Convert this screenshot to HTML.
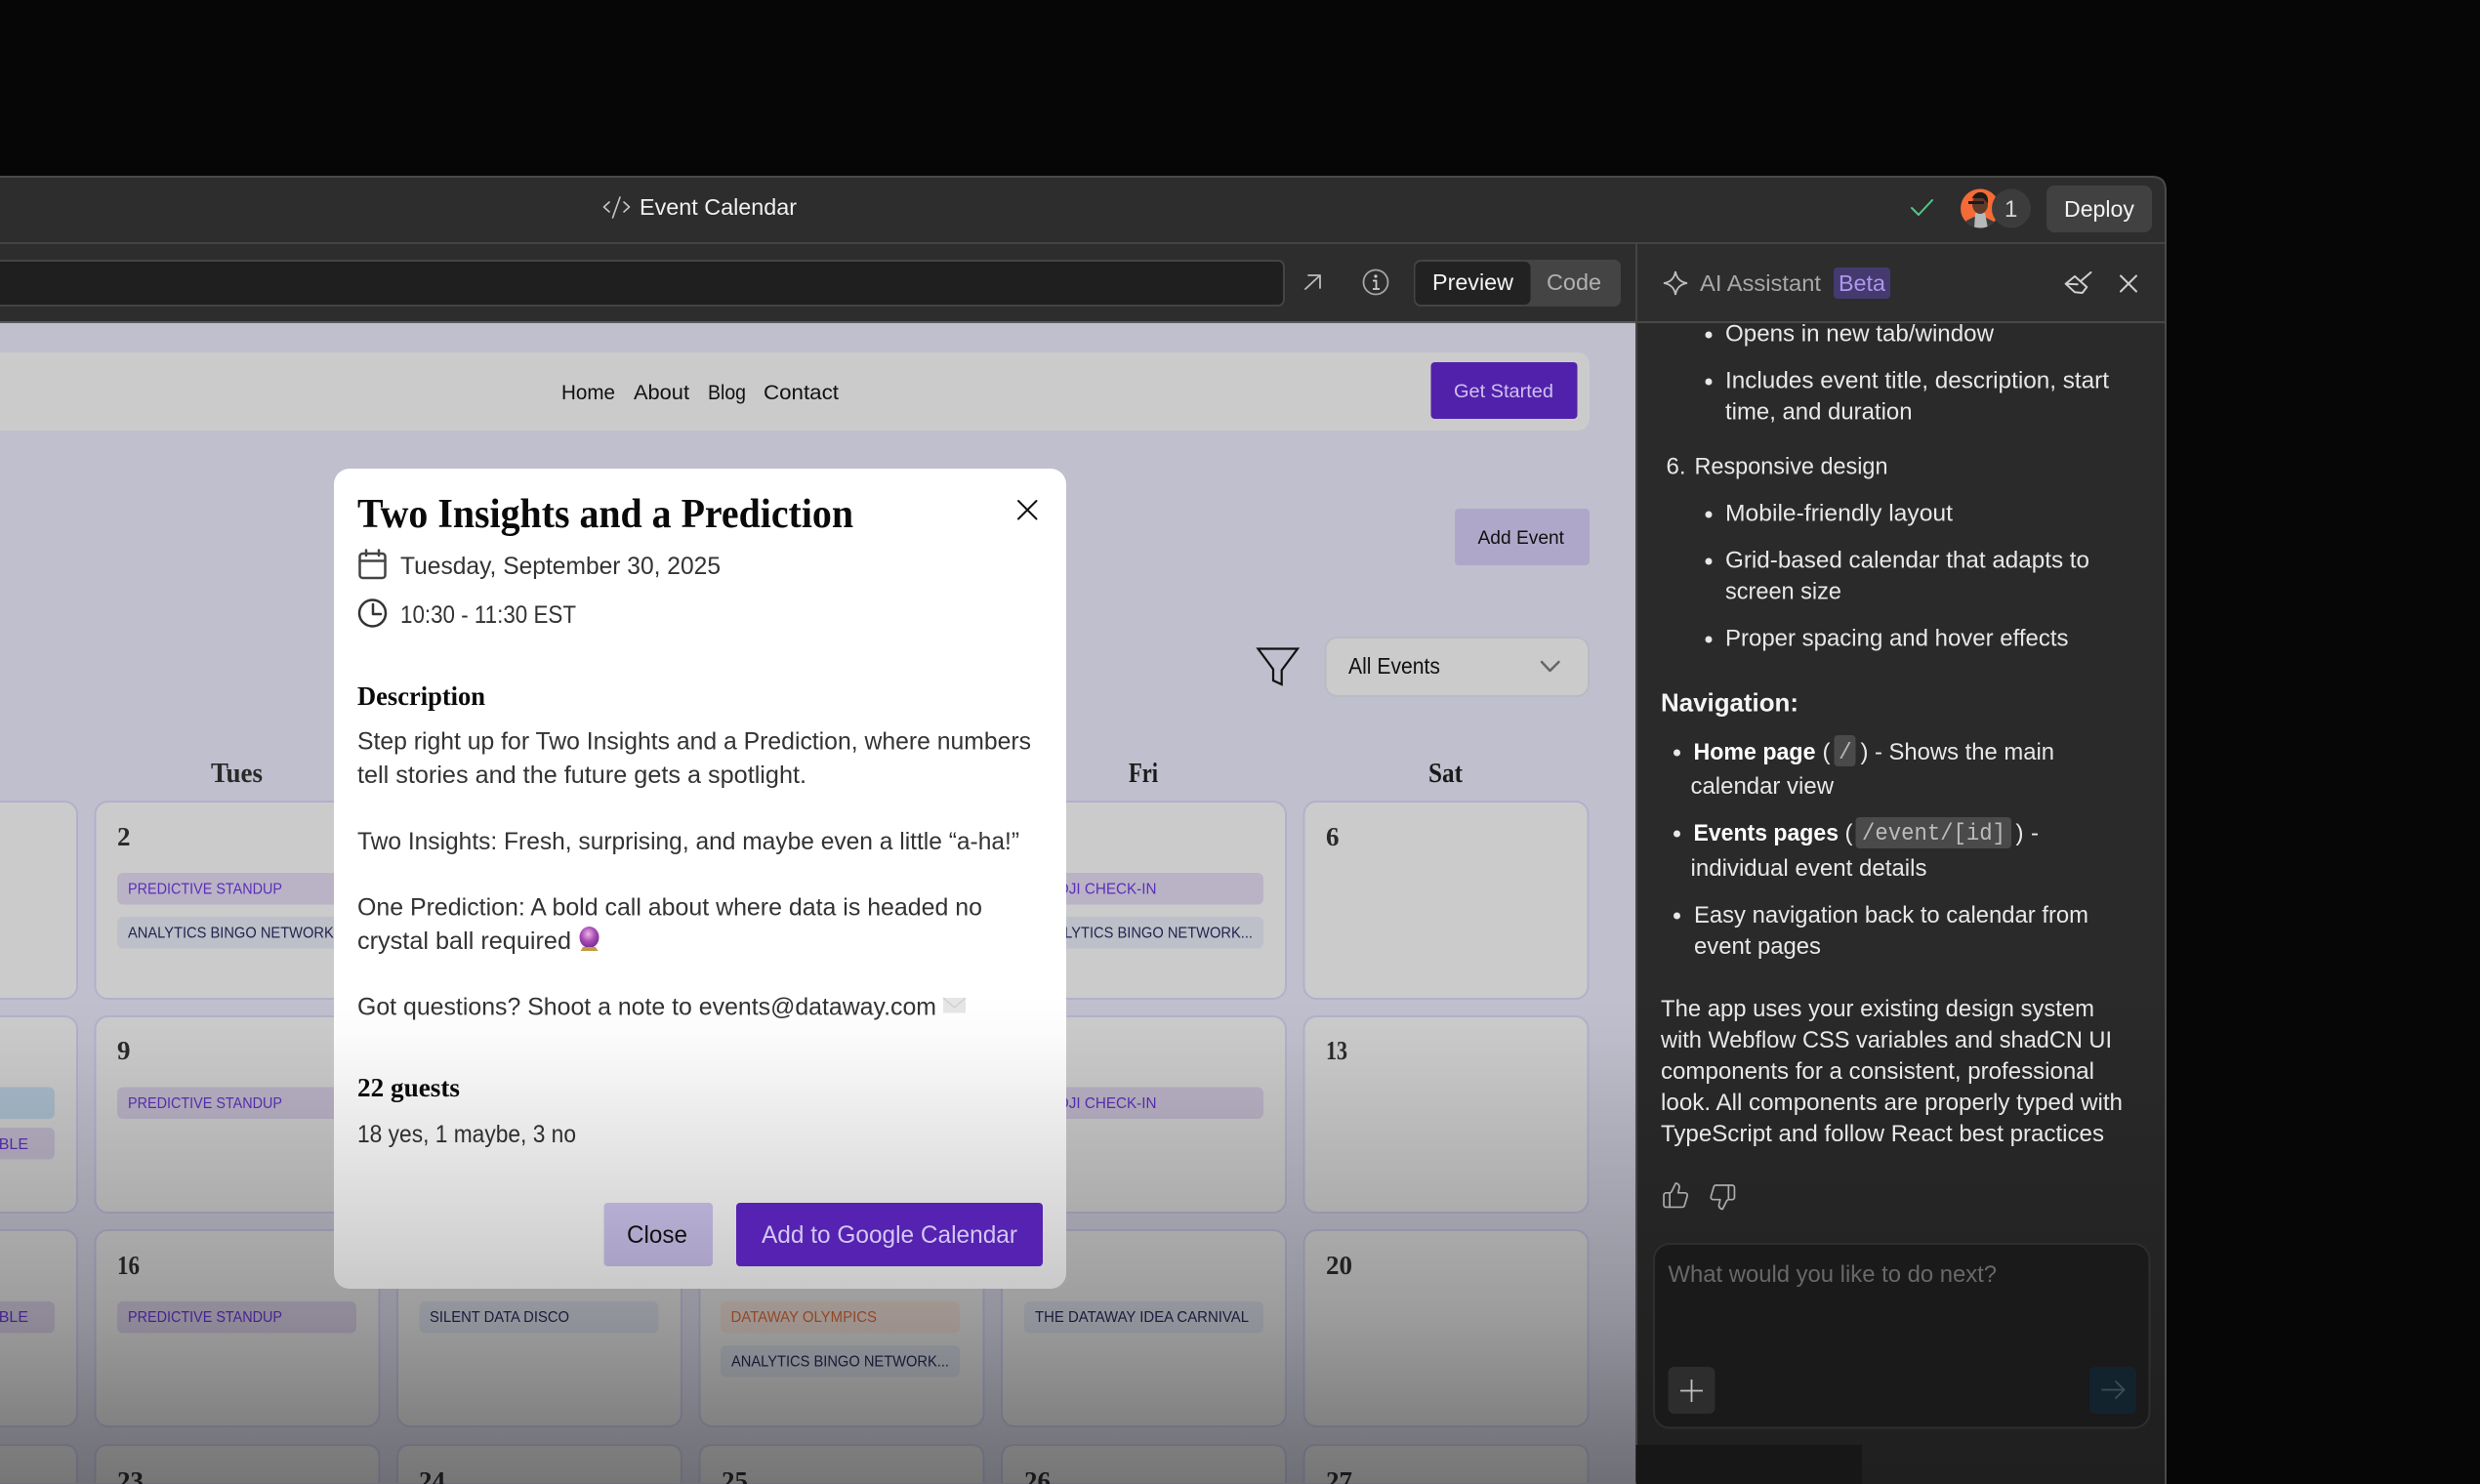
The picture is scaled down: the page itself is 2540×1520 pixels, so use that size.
<!DOCTYPE html>
<html lang="en">
<head>
<meta charset="utf-8">
<title>Event Calendar</title>
<style>
html,body{margin:0;padding:0;background:#060606;width:2540px;height:1520px;overflow:hidden}
svg{display:block;position:absolute;left:0;top:0}
text{font-family:"Liberation Sans",sans-serif;white-space:pre}
.serif{font-family:"Liberation Serif",serif;font-weight:700}
.mono{font-family:"Liberation Mono",monospace}
.cell{fill:#cbcbcb;stroke:#b3b0cc;stroke-width:2}
.day{font-family:"Liberation Serif",serif;font-weight:700;font-size:27px;fill:#2a2a2a}
.hd{font-family:"Liberation Serif",serif;font-weight:700;font-size:28px;fill:#1a1a1a}
.tp{fill:#bab3c6}.tg{fill:#bdc0c9}.tb{fill:#a9bccb}.to{fill:#cfc0b9}
.lp{font-size:16px;fill:#5a2fb8}.ln{font-size:16px;fill:#24244e}.lo{font-size:16px;fill:#bd5d32}
.m{font-size:25px;fill:#333}
.p{font-size:24px;fill:#e8e8e8}
.pb{font-size:24px;fill:#fff;font-weight:700}
.ic{fill:none;stroke-linecap:round;stroke-linejoin:round}
</style>
</head>
<body>
<svg width="2540" height="1520" viewBox="0 0 2540 1520" xmlns="http://www.w3.org/2000/svg">
<defs>
<clipPath id="pv"><rect x="0" y="330" width="1675" height="1190"/></clipPath>
<linearGradient id="ov" x1="0" y1="1020" x2="0" y2="1520" gradientUnits="userSpaceOnUse">
<stop offset="0" stop-color="#000" stop-opacity="0"/>
<stop offset="0.08" stop-color="#000" stop-opacity="0.015"/>
<stop offset="0.28" stop-color="#000" stop-opacity="0.09"/>
<stop offset="0.48" stop-color="#000" stop-opacity="0.165"/>
<stop offset="0.60" stop-color="#000" stop-opacity="0.21"/>
<stop offset="0.66" stop-color="#000" stop-opacity="0.235"/>
<stop offset="0.876" stop-color="#000" stop-opacity="0.36"/>
<stop offset="1" stop-color="#000" stop-opacity="0.42"/>
</linearGradient>
<linearGradient id="panel" x1="0" y1="1000" x2="0" y2="1520" gradientUnits="userSpaceOnUse">
<stop offset="0" stop-color="#2a2a2a"/>
<stop offset="1" stop-color="#1f1f1f"/>
</linearGradient>
<linearGradient id="closeb" x1="0" y1="1232" x2="0" y2="1297" gradientUnits="userSpaceOnUse">
<stop offset="0" stop-color="#b6aed3"/>
<stop offset="1" stop-color="#aaa1c6"/>
</linearGradient>
<radialGradient id="ball" cx="0.45" cy="0.35" r="0.7">
<stop offset="0" stop-color="#ecb8e4"/>
<stop offset="0.5" stop-color="#a94cb6"/>
<stop offset="1" stop-color="#6a2a88"/>
</radialGradient>
<clipPath id="av"><circle cx="2028" cy="213.5" r="20"/></clipPath>
</defs>

<!-- page -->
<rect width="2540" height="1520" fill="#060606"/>

<!-- window frame -->
<path d="M-4 181 H2204 Q2218 181 2218 195 V1519 H-4 Z" fill="#2d2d2d" stroke="#4a4a4a" stroke-width="2"/>

<!-- title bar -->
<g class="ic" stroke="#c4c4c4" stroke-width="1.6">
<path d="M624 207 L618.5 212 L624 217"/><path d="M635 202 L627.5 223"/><path d="M639 207 L644.5 212 L639 217"/>
</g>
<text x="655" y="220" font-size="23" fill="#f0f0f0" textLength="161" lengthAdjust="spacingAndGlyphs">Event Calendar</text>
<path class="ic" d="M1958 213 L1965 220 L1979 205" stroke="#52c98c" stroke-width="2"/>
<g clip-path="url(#av)">
<rect x="2008" y="193" width="40" height="41" fill="#f46b36"/>
<path d="M2008 234 L2014 226 L2022 222 L2032 222 L2044 228 L2048 234 Z" fill="#3a3d3c"/>
<path d="M2022 234 L2023 218 L2033 218 L2036 234 Z" fill="#b5b9ba"/>
<ellipse cx="2028" cy="209" rx="8" ry="10" fill="#5d3a2b"/>
<path d="M2019 205 Q2022 196 2030 197 Q2037 199 2036 208 L2031 203 L2020 203 Z" fill="#1e1a18"/>
<rect x="2016" y="206" width="16" height="3" fill="#1a1a1a"/>
</g>
<circle cx="2060" cy="213.5" r="20" fill="#3c3c3c"/>
<text x="2053" y="222" font-size="24" fill="#d6d6d6">1</text>
<rect x="2096" y="190" width="108" height="48" rx="8" fill="#414141"/>
<text x="2114" y="222" font-size="23" fill="#f2f2f2" textLength="72" lengthAdjust="spacingAndGlyphs">Deploy</text>
<rect x="0" y="248" width="2217" height="2" fill="#444"/>

<!-- toolbar -->
<rect x="-10" y="267" width="1325" height="46" rx="6" fill="#1f1f1f" stroke="#444" stroke-width="2"/>
<path class="ic" d="M1337 296 L1352 282 M1340 282 H1352 V295" stroke="#bdbdbd" stroke-width="1.8"/>
<circle cx="1409" cy="289" r="12.5" fill="none" stroke="#a5a5a5" stroke-width="1.8"/>
<circle cx="1409" cy="283" r="1.6" fill="#d0d0d0"/>
<path d="M1406 287.5 H1409.5 V296 M1406 296 H1413" fill="none" stroke="#d0d0d0" stroke-width="1.7"/>
<rect x="1448" y="266" width="212" height="48" rx="7" fill="#444"/>
<rect x="1449.5" y="268" width="118" height="44" rx="6" fill="#222"/>
<text x="1467" y="297" font-size="23" fill="#f4f4f4" textLength="83" lengthAdjust="spacingAndGlyphs">Preview</text>
<text x="1584" y="297" font-size="23" fill="#b0b0b0" textLength="56" lengthAdjust="spacingAndGlyphs">Code</text>

<!-- preview -->
<g clip-path="url(#pv)">
<rect x="0" y="330" width="1675" height="1190" fill="#bfbfcd"/>
<rect x="-20" y="361" width="1648" height="80" rx="12" fill="#cbcbcb"/>
<text x="575" y="409" font-size="21.5" fill="#111" textLength="55" lengthAdjust="spacingAndGlyphs">Home</text>
<text x="649" y="409" font-size="21.5" fill="#111" textLength="57" lengthAdjust="spacingAndGlyphs">About</text>
<text x="725" y="409" font-size="21.5" fill="#111" textLength="39" lengthAdjust="spacingAndGlyphs">Blog</text>
<text x="782" y="409" font-size="21.5" fill="#111" textLength="77" lengthAdjust="spacingAndGlyphs">Contact</text>
<rect x="1465.5" y="371" width="150" height="58" rx="4" fill="#5121ab"/>
<text x="1489" y="407" font-size="19" fill="#cfc1ef" textLength="102" lengthAdjust="spacingAndGlyphs">Get Started</text>
<rect x="1490" y="521" width="138" height="58" rx="4" fill="#afa7c9"/>
<text x="1513.5" y="557" font-size="19" fill="#111" textLength="88.5" lengthAdjust="spacingAndGlyphs">Add Event</text>

<!-- filter -->
<path d="M1288.5 664.5 H1329 L1312.7 686.5 V701 L1304 697 V685.5 Z" fill="none" stroke="#111" stroke-width="2.2" stroke-linejoin="miter"/>
<rect x="1357.5" y="653" width="269.5" height="60" rx="12" fill="#cbcbcb" stroke="#bab9c6" stroke-width="2"/>
<text x="1381" y="690" font-size="23" fill="#111" textLength="94" lengthAdjust="spacingAndGlyphs">All Events</text>
<path class="ic" d="M1579 678 L1587.5 687 L1596.5 678" stroke="#666" stroke-width="2.5"/>

<!-- day headers -->
<text class="hd" x="216" y="801" textLength="53" lengthAdjust="spacingAndGlyphs" style="fill:#2a2a2a">Tues</text>
<text class="hd" x="1156" y="801" textLength="30" lengthAdjust="spacingAndGlyphs">Fri</text>
<text class="hd" x="1463" y="801" textLength="35" lengthAdjust="spacingAndGlyphs">Sat</text>

<!-- row 1 -->
<rect class="cell" x="-212" y="821" width="291" height="202" rx="13"/>
<rect class="cell" x="97.5" y="821" width="291" height="202" rx="13"/>
<rect class="cell" x="407" y="821" width="291" height="202" rx="13"/>
<rect class="cell" x="716.5" y="821" width="291" height="202" rx="13"/>
<rect class="cell" x="1026" y="821" width="291" height="202" rx="13"/>
<rect class="cell" x="1335.5" y="821" width="291" height="202" rx="13"/>
<!-- row 2 -->
<rect class="cell" x="-212" y="1041" width="291" height="201" rx="13"/>
<rect class="cell" x="97.5" y="1041" width="291" height="201" rx="13"/>
<rect class="cell" x="407" y="1041" width="291" height="201" rx="13"/>
<rect class="cell" x="716.5" y="1041" width="291" height="201" rx="13"/>
<rect class="cell" x="1026" y="1041" width="291" height="201" rx="13"/>
<rect class="cell" x="1335.5" y="1041" width="291" height="201" rx="13"/>
<!-- row 3 -->
<rect class="cell" x="-212" y="1260" width="291" height="201" rx="13"/>
<rect class="cell" x="97.5" y="1260" width="291" height="201" rx="13"/>
<rect class="cell" x="407" y="1260" width="291" height="201" rx="13"/>
<rect class="cell" x="716.5" y="1260" width="291" height="201" rx="13"/>
<rect class="cell" x="1026" y="1260" width="291" height="201" rx="13"/>
<rect class="cell" x="1335.5" y="1260" width="291" height="201" rx="13"/>
<!-- row 4 (cut by frame) -->
<path class="cell" d="M-5 1519 V1480 H66 Q79 1480 79 1493 V1519"/>
<path class="cell" d="M97.5 1519 V1493 Q97.5 1480 110.5 1480 H375.5 Q388.5 1480 388.5 1493 V1519"/>
<path class="cell" d="M407 1519 V1493 Q407 1480 420 1480 H685 Q698 1480 698 1493 V1519"/>
<path class="cell" d="M716.5 1519 V1493 Q716.5 1480 729.5 1480 H994.5 Q1007.5 1480 1007.5 1493 V1519"/>
<path class="cell" d="M1026 1519 V1493 Q1026 1480 1039 1480 H1304 Q1317 1480 1317 1493 V1519"/>
<path class="cell" d="M1335.5 1519 V1493 Q1335.5 1480 1348.5 1480 H1613.5 Q1626.5 1480 1626.5 1493 V1519"/>

<!-- day numbers -->
<text class="day" x="120" y="866">2</text>
<text class="day" x="1358" y="866">6</text>
<text class="day" x="120" y="1085">9</text>
<text class="day" x="1358" y="1085" textLength="22" lengthAdjust="spacingAndGlyphs">13</text>
<text class="day" x="120" y="1305" textLength="23" lengthAdjust="spacingAndGlyphs">16</text>
<text class="day" x="1358" y="1305" textLength="27" lengthAdjust="spacingAndGlyphs">20</text>
<text class="day" x="120" y="1526" textLength="27" lengthAdjust="spacingAndGlyphs">23</text>
<text class="day" x="429" y="1526" textLength="27" lengthAdjust="spacingAndGlyphs">24</text>
<text class="day" x="739" y="1526" textLength="27" lengthAdjust="spacingAndGlyphs">25</text>
<text class="day" x="1049" y="1526" textLength="27" lengthAdjust="spacingAndGlyphs">26</text>
<text class="day" x="1358" y="1526" textLength="27" lengthAdjust="spacingAndGlyphs">27</text>

<!-- Tues tags -->
<rect class="tp" x="120" y="894" width="245" height="32.5" rx="6"/>
<text class="lp" x="131" y="915.5" textLength="158" lengthAdjust="spacingAndGlyphs">PREDICTIVE STANDUP</text>
<rect class="tg" x="120" y="939" width="245" height="32.5" rx="6"/>
<text class="ln" x="131" y="960.5" textLength="223" lengthAdjust="spacingAndGlyphs">ANALYTICS BINGO NETWORK...</text>
<rect class="tp" x="120" y="1113.5" width="245" height="32.5" rx="6"/>
<text class="lp" x="131" y="1135" textLength="158" lengthAdjust="spacingAndGlyphs">PREDICTIVE STANDUP</text>
<rect class="tp" x="120" y="1333" width="245" height="32.5" rx="6"/>
<text class="lp" x="131" y="1354" textLength="158" lengthAdjust="spacingAndGlyphs">PREDICTIVE STANDUP</text>
<!-- Mon tags -->
<rect class="tb" x="-190" y="1113.5" width="246" height="32.5" rx="6"/>
<rect class="tp" x="-190" y="1155" width="246" height="32.5" rx="6"/>
<text class="lp" x="29" y="1177" text-anchor="end">ROUND TABLE</text>
<rect class="tp" x="-190" y="1333" width="246" height="32.5" rx="6"/>
<text class="lp" x="29" y="1354" text-anchor="end">ROUND TABLE</text>
<!-- Wed / Thu -->
<rect class="tg" x="429.5" y="1333" width="245" height="32.5" rx="6"/>
<text class="ln" x="440" y="1354" textLength="143" lengthAdjust="spacingAndGlyphs">SILENT DATA DISCO</text>
<rect class="to" x="738" y="1333" width="245" height="32.5" rx="6"/>
<text class="lo" x="748.5" y="1354" textLength="149.5" lengthAdjust="spacingAndGlyphs">DATAWAY OLYMPICS</text>
<rect class="tg" x="738" y="1378" width="245" height="32.5" rx="6"/>
<text class="ln" x="749" y="1399.5" textLength="223" lengthAdjust="spacingAndGlyphs">ANALYTICS BINGO NETWORK...</text>
<!-- Fri -->
<rect class="tp" x="1049" y="894" width="245" height="32.5" rx="6"/>
<text class="lp" x="1060" y="915.5" textLength="124.5" lengthAdjust="spacingAndGlyphs">EMOJI CHECK-IN</text>
<rect class="tg" x="1049" y="939" width="245" height="32.5" rx="6"/>
<text class="ln" x="1060" y="960.5" textLength="223" lengthAdjust="spacingAndGlyphs">ANALYTICS BINGO NETWORK...</text>
<rect class="tp" x="1049" y="1113.5" width="245" height="32.5" rx="6"/>
<text class="lp" x="1060" y="1135" textLength="124.5" lengthAdjust="spacingAndGlyphs">EMOJI CHECK-IN</text>
<rect class="tg" x="1049" y="1333" width="245" height="32.5" rx="6"/>
<text class="ln" x="1060" y="1354" textLength="219" lengthAdjust="spacingAndGlyphs">THE DATAWAY IDEA CARNIVAL</text>

<!-- modal -->
<rect x="342" y="480" width="750" height="840" rx="16" fill="#fff"/>
<text class="serif" x="366" y="540" font-size="42" fill="#0a0a0a" textLength="508" lengthAdjust="spacingAndGlyphs">Two Insights and a Prediction</text>
<path class="ic" d="M1043 513 L1061.5 531.5 M1061.5 513 L1043 531.5" stroke="#111" stroke-width="2"/>
<g class="ic" stroke="#444" stroke-width="2.5">
<rect x="368.5" y="567" width="26" height="25" rx="3"/>
<path d="M368.5 574.5 H394.5 M375 563.5 V569 M388 563.5 V569"/>
</g>
<text class="m" x="410" y="588" textLength="328" lengthAdjust="spacingAndGlyphs">Tuesday, September 30, 2025</text>
<g class="ic" stroke="#333" stroke-width="2.5">
<circle cx="381.5" cy="628" r="13.5"/>
<path d="M382 619 V629 H390"/>
</g>
<text class="m" x="410" y="638" textLength="180" lengthAdjust="spacingAndGlyphs">10:30 - 11:30 EST</text>
<text class="serif" x="366" y="722" font-size="27" fill="#0a0a0a" textLength="131" lengthAdjust="spacingAndGlyphs">Description</text>
<text class="m" x="366" y="767.5" textLength="690" lengthAdjust="spacingAndGlyphs">Step right up for Two Insights and a Prediction, where numbers</text>
<text class="m" x="366" y="802" textLength="460" lengthAdjust="spacingAndGlyphs">tell stories and the future gets a spotlight.</text>
<text class="m" x="366" y="870" textLength="678" lengthAdjust="spacingAndGlyphs">Two Insights: Fresh, surprising, and maybe even a little “a-ha!”</text>
<text class="m" x="366" y="937.5" textLength="640" lengthAdjust="spacingAndGlyphs">One Prediction: A bold call about where data is headed no</text>
<text class="m" x="366" y="972" textLength="219" lengthAdjust="spacingAndGlyphs">crystal ball required</text>
<ellipse cx="603.5" cy="960" rx="10" ry="11" fill="url(#ball)"/>
<path d="M597 970 H610 L612.5 974 H594.5 Z" fill="#c49a45"/>
<text class="m" x="366" y="1039.5" textLength="593" lengthAdjust="spacingAndGlyphs">Got questions? Shoot a note to events@dataway.com</text>
<rect x="966" y="1022" width="23" height="15.5" fill="#e6e6e6"/>
<path d="M966 1022 L977.5 1032 L989 1022" fill="none" stroke="#cfcfcf" stroke-width="1.2"/>
<text class="serif" x="366" y="1123" font-size="27" fill="#0a0a0a" textLength="105" lengthAdjust="spacingAndGlyphs">22 guests</text>
<text class="m" x="366" y="1170" textLength="224" lengthAdjust="spacingAndGlyphs">18 yes, 1 maybe, 3 no</text>

<!-- dim gradient -->
<rect x="0" y="1020" width="1675" height="500" fill="url(#ov)"/>

<!-- modal buttons -->
<rect x="618.5" y="1232" width="111.5" height="65" rx="4" fill="url(#closeb)"/>
<text x="642" y="1273" font-size="25" fill="#111" textLength="62" lengthAdjust="spacingAndGlyphs">Close</text>
<rect x="754" y="1232" width="314" height="65" rx="4" fill="#5522b2"/>
<text x="780" y="1273" font-size="25" fill="#d3c6f2" textLength="262" lengthAdjust="spacingAndGlyphs">Add to Google Calendar</text>
</g>

<!-- AI panel -->
<rect x="1676" y="330" width="541" height="1190" fill="url(#panel)"/>
<rect x="1675" y="250" width="2" height="1230" fill="#444"/>
<rect x="1676" y="1480" width="231" height="40" fill="#171717"/>
<rect x="1677" y="329" width="540" height="2" fill="#484848"/>
<rect x="0" y="329" width="1675" height="2" fill="#5a5a5e"/>
<rect x="2217" y="195" width="2" height="1325" fill="#4a4a4a"/>

<path d="M1716 278 C1717 285 1721 289 1728 290 C1721 291 1717 295 1716 302 C1715 295 1711 291 1704 290 C1711 289 1715 285 1716 278 Z" fill="none" stroke="#bdbdbd" stroke-width="1.8"/>
<text x="1741" y="298" font-size="23" fill="#a8a8a8" textLength="124" lengthAdjust="spacingAndGlyphs">AI Assistant</text>
<rect x="1878" y="274" width="58" height="32" rx="4" fill="#453a70"/>
<text x="1883" y="298" font-size="23" fill="#ac97ec" textLength="48" lengthAdjust="spacingAndGlyphs">Beta</text>
<g class="ic" stroke="#cfcfcf" stroke-width="2">
<path d="M2115.7 290.7 L2125 283 L2137.3 294 L2132.7 300 L2125 299.3 Z"/>
<path d="M2115.7 290.7 L2127.7 291.3"/>
<path d="M2131 288 L2141.5 279"/>
</g>
<path class="ic" d="M2172 282.5 L2188 298.5 M2188 282.5 L2172 298.5" stroke="#cfcfcf" stroke-width="2"/>

<circle cx="1750" cy="343" r="3.5" fill="#e8e8e8"/>
<text class="p" x="1767" y="349.5" textLength="275" lengthAdjust="spacingAndGlyphs">Opens in new tab/window</text>
<circle cx="1750" cy="391" r="3.5" fill="#e8e8e8"/>
<text class="p" x="1767" y="397.5" textLength="393" lengthAdjust="spacingAndGlyphs">Includes event title, description, start</text>
<text class="p" x="1767" y="429.5" textLength="191.5" lengthAdjust="spacingAndGlyphs">time, and duration</text>
<text class="p" x="1706.5" y="485.5">6.</text>
<text class="p" x="1735.5" y="485.5" textLength="198" lengthAdjust="spacingAndGlyphs">Responsive design</text>
<circle cx="1750" cy="527" r="3.5" fill="#e8e8e8"/>
<text class="p" x="1767" y="533.5" textLength="233" lengthAdjust="spacingAndGlyphs">Mobile-friendly layout</text>
<circle cx="1750" cy="575" r="3.5" fill="#e8e8e8"/>
<text class="p" x="1767" y="581.5" textLength="373" lengthAdjust="spacingAndGlyphs">Grid-based calendar that adapts to</text>
<text class="p" x="1767" y="613.5" textLength="119" lengthAdjust="spacingAndGlyphs">screen size</text>
<circle cx="1750" cy="655" r="3.5" fill="#e8e8e8"/>
<text class="p" x="1767" y="661.5" textLength="351.5" lengthAdjust="spacingAndGlyphs">Proper spacing and hover effects</text>

<text x="1701" y="728.5" font-size="26" font-weight="700" fill="#f4f4f4" textLength="141" lengthAdjust="spacingAndGlyphs">Navigation:</text>

<circle cx="1717.5" cy="771" r="3.5" fill="#e8e8e8"/>
<text class="pb" x="1734.5" y="778" textLength="125" lengthAdjust="spacingAndGlyphs">Home page</text>
<text class="p" x="1866.5" y="778">(</text>
<rect x="1878.5" y="753" width="22" height="32" rx="4" fill="#4a4a4a"/>
<text class="mono" x="1883" y="777" font-size="23" fill="#b5b5b5">/</text>
<text class="p" x="1905.5" y="778">)</text>
<text class="p" x="1920" y="778" textLength="184" lengthAdjust="spacingAndGlyphs">- Shows the main</text>
<text class="p" x="1731.5" y="813" textLength="146.5" lengthAdjust="spacingAndGlyphs">calendar view</text>

<circle cx="1717.5" cy="854" r="3.5" fill="#e8e8e8"/>
<text class="pb" x="1734.5" y="861" textLength="148.5" lengthAdjust="spacingAndGlyphs">Events pages</text>
<text class="p" x="1889.5" y="861">(</text>
<rect x="1900.5" y="837" width="159.5" height="32" rx="4" fill="#4a4a4a"/>
<text class="mono" x="1907" y="860" font-size="24" fill="#bcbcbc" textLength="147" lengthAdjust="spacingAndGlyphs">/event/[id]</text>
<text class="p" x="2064.5" y="861">)</text>
<text class="p" x="2080" y="861">-</text>
<text class="p" x="1731.5" y="897" textLength="242" lengthAdjust="spacingAndGlyphs">individual event details</text>

<circle cx="1717.5" cy="938" r="3.5" fill="#e8e8e8"/>
<text class="p" x="1735" y="945" textLength="404" lengthAdjust="spacingAndGlyphs">Easy navigation back to calendar from</text>
<text class="p" x="1735" y="977" textLength="130" lengthAdjust="spacingAndGlyphs">event pages</text>

<text class="p" x="1701" y="1041" textLength="444" lengthAdjust="spacingAndGlyphs">The app uses your existing design system</text>
<text class="p" x="1701" y="1073" textLength="462" lengthAdjust="spacingAndGlyphs">with Webflow CSS variables and shadCN UI</text>
<text class="p" x="1701" y="1105" textLength="444" lengthAdjust="spacingAndGlyphs">components for a consistent, professional</text>
<text class="p" x="1701" y="1137" textLength="473" lengthAdjust="spacingAndGlyphs">look. All components are properly typed with</text>
<text class="p" x="1701" y="1169" textLength="454" lengthAdjust="spacingAndGlyphs">TypeScript and follow React best practices</text>

<g class="ic" stroke="#ababab" stroke-width="1.4" transform="translate(1701.6 1209.6) scale(1.22)">
<path d="M7 10v12"/>
<path d="M15 5.88 14 10h5.83a2 2 0 0 1 1.92 2.56l-2.33 8A2 2 0 0 1 17.5 22H4a2 2 0 0 1-2-2v-8a2 2 0 0 1 2-2h2.76a2 2 0 0 0 1.79-1.11L12 2a3.13 3.13 0 0 1 3 3.88Z"/>
</g>
<g class="ic" stroke="#ababab" stroke-width="1.4" transform="translate(1749.6 1211.6) scale(1.22)">
<path d="M17 14V2"/>
<path d="M9 18.12 10 14H4.17a2 2 0 0 1-1.92-2.56l2.33-8A2 2 0 0 1 6.5 2H20a2 2 0 0 1 2 2v8a2 2 0 0 1-2 2h-2.76a2 2 0 0 0-1.79 1.11L12 22a3.13 3.13 0 0 1-3-3.88Z"/>
</g>

<rect x="1694" y="1274" width="507.5" height="188.5" rx="16" fill="#1a1a1a" stroke="#2e2e2e" stroke-width="2"/>
<text x="1708.5" y="1313" font-size="24" fill="#686868" textLength="336.5" lengthAdjust="spacingAndGlyphs">What would you like to do next?</text>
<rect x="1708.5" y="1400" width="48" height="48" rx="6" fill="#2d2d2d"/>
<path d="M1721 1424.5 H1744 M1732.5 1413 V1436" stroke="#c0c0c0" stroke-width="1.8" fill="none"/>
<rect x="2140" y="1400" width="48" height="48" rx="6" fill="#13232e"/>
<path class="ic" d="M2153 1423.5 H2175.5 M2167 1415 L2175.5 1423.5 L2167 1432" stroke="#3f4c56" stroke-width="1.8"/>
</svg>
</body>
</html>
